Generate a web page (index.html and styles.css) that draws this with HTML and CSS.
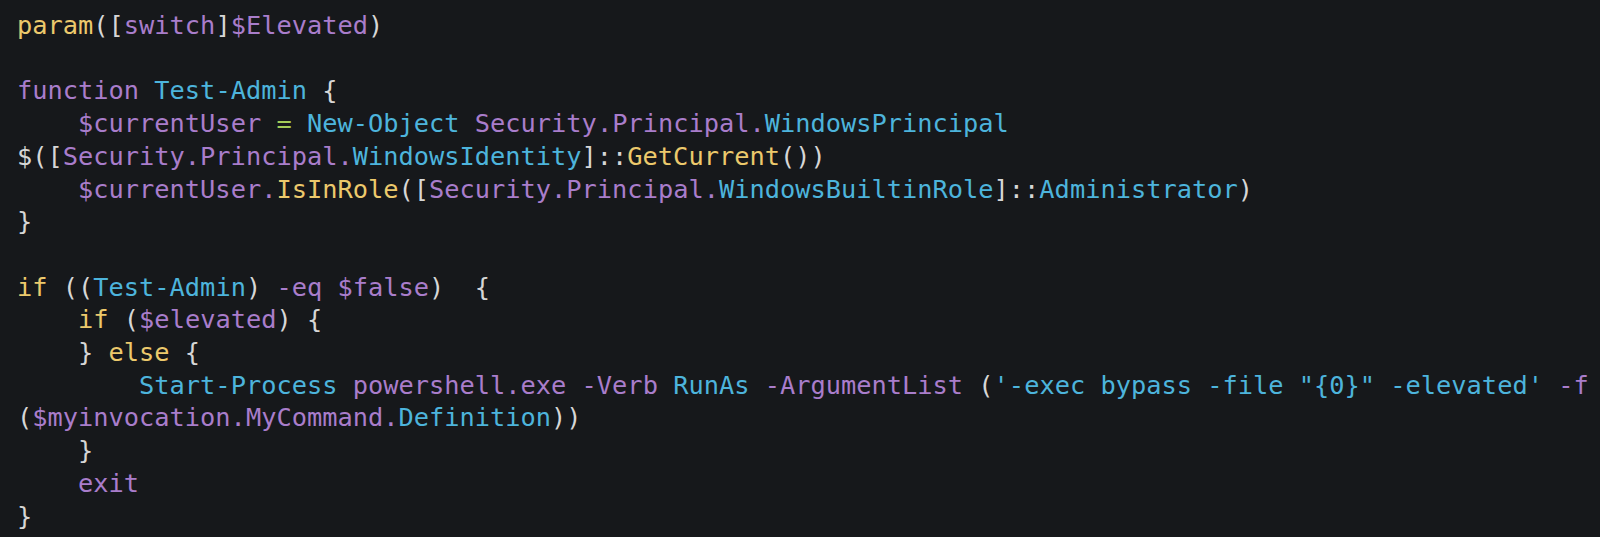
FILE: index.html
```html
<!DOCTYPE html>
<html>
<head>
<meta charset="utf-8">
<link rel="stylesheet" href="styles.css">
</head>
<body>
<pre class="code"><code><span class="y">param</span>([<span class="p">switch</span>]<span class="p">$Elevated</span>)

<span class="p">function</span> <span class="c">Test-Admin</span> {
    <span class="p">$currentUser</span> <span class="g">=</span> <span class="c">New-Object</span> <span class="p">Security.Principal.</span><span class="c">WindowsPrincipal</span>
$([<span class="p">Security.Principal.</span><span class="c">WindowsIdentity</span>]::<span class="y">GetCurrent</span>())
    <span class="p">$currentUser.</span><span class="y">IsInRole</span>([<span class="p">Security.Principal.</span><span class="c">WindowsBuiltinRole</span>]::<span class="c">Administrator</span>)
}

<span class="y">if</span> ((<span class="c">Test-Admin</span>) <span class="p">-eq</span> <span class="p">$false</span>)  {
    <span class="y">if</span> (<span class="p">$elevated</span>) {
    } <span class="y">else</span> {
        <span class="c">Start-Process</span> <span class="p">powershell.exe</span> <span class="p">-Verb</span> <span class="c">RunAs</span> <span class="p">-ArgumentList</span> (<span class="c">'-exec bypass -file "{0}" -elevated'</span> <span class="p">-f</span>
(<span class="p">$myinvocation.MyCommand.</span><span class="c">Definition</span>))
    }
    <span class="p">exit</span>
}</code></pre>
</body>
</html>
```

FILE: styles.css
```css
html, body {
  margin: 0;
  padding: 0;
  background: #16181b;
  height: 100%;
  overflow: hidden;
}

.code {
  margin: 0;
  padding: 9px 0 0 17px;
  font-family: "DejaVu Sans Mono", monospace;
  font-size: 25.35px;
  line-height: 32.7px;
  color: #d6d6d6;
  white-space: pre;
}

.code code {
  font-family: inherit;
}

.y { color: #ecc96c; }
.p { color: #a97dcb; }
.c { color: #4db4dc; }
.g { color: #a4cc58; }
```
